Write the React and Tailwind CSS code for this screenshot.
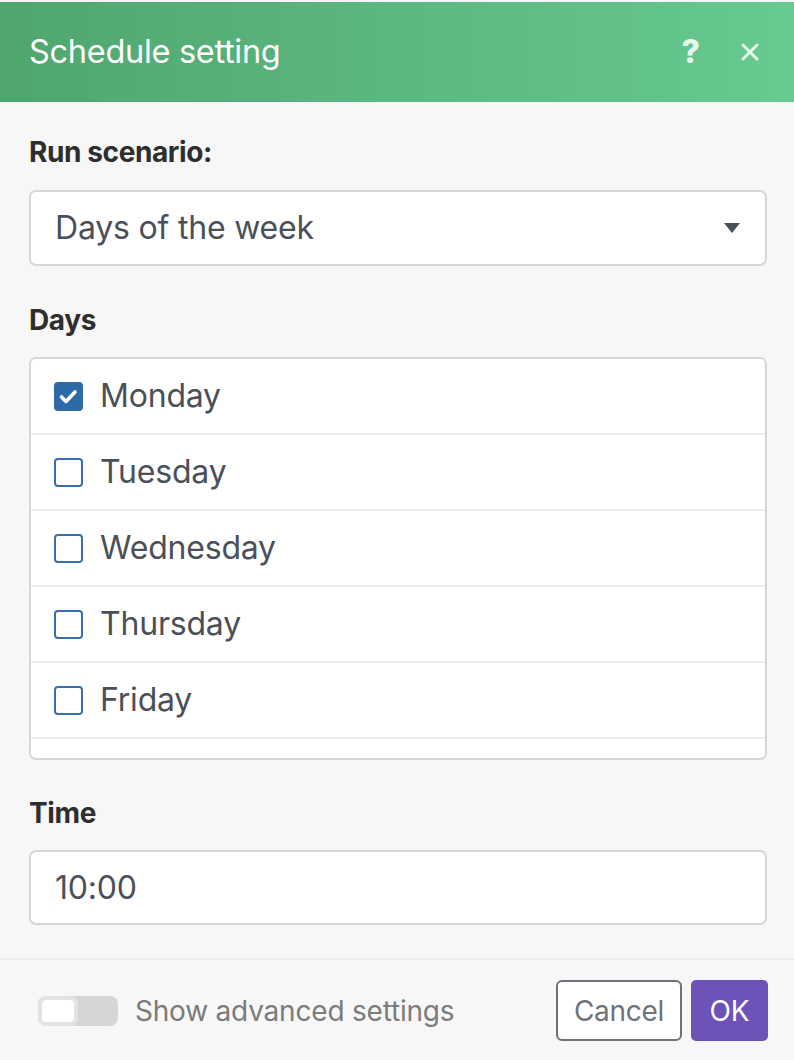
import React, { useState } from "react";

const days = ["Monday", "Tuesday", "Wednesday", "Thursday", "Friday", "Saturday"];

const CheckBox = ({ checked }) => (
    <span
        className={
            "flex items-center justify-center w-[29px] h-[29px] rounded-[4px] border-2 " +
            (checked ? "bg-[#2d6aa6] border-[#2d6aa6]" : "bg-white border-[#3570ab]")
        }
    >
        {checked && (
            <svg width="25" height="25" viewBox="0 0 25 25">
                <path d="M5.5 13l4.5 4.5 9-9.5" fill="none" stroke="#fff" strokeWidth="3.6" strokeLinecap="round" strokeLinejoin="round" />
            </svg>
        )}
    </span>
);

const App = () => {
    const [selected, setSelected] = useState(["Monday"]);

    const toggleDay = (day) => {
        setSelected(selected.includes(day) ? selected.filter((d) => d !== day) : [...selected, day]);
    };

    return (
        <div className="w-[794px] h-[1060px] bg-[#f7f7f7] flex flex-col overflow-hidden font-['Inter',sans-serif]">
            {/* Header */}
            <div className="mt-[2px] h-[100px] shrink-0 flex items-center justify-between pl-[29px] pr-[34px] bg-gradient-to-r from-[#4fa66f] to-[#67ca91]">
                <h1 className="text-[32.5px] text-white font-normal tracking-[-0.3px]">Schedule setting</h1>
                <div className="flex items-center gap-[40px] text-[#e6f7ec]">
                    <span className="text-[32px] font-extrabold leading-none">?</span>
                    <svg width="20" height="20" viewBox="0 0 20 20">
                        <path d="M3 3l14 14M17 3L3 17" stroke="#e6f7ec" strokeWidth="3" strokeLinecap="round" />
                    </svg>
                </div>
            </div>

            {/* Body */}
            <div className="pl-[29px] pr-[27px] pt-[34px] flex flex-col">
                <label className="text-[28px] font-bold text-[#2e2e2e] leading-[32px] tracking-[-0.4px]">Run scenario:</label>
                <div className="mt-[22px] h-[76px] bg-white border-2 border-[#d6d6d6] rounded-[7px] flex items-center justify-between pl-[24px] pr-[24px]">
                    <span className="text-[32px] text-[#4b5058] tracking-[-0.2px]">Days of the week</span>
                    <svg width="18" height="12" viewBox="0 0 18 12">
                        <path d="M1 1h16L9 11z" fill="#4b5058" />
                    </svg>
                </div>

                <label className="mt-[38px] text-[28px] font-bold text-[#2e2e2e] leading-[32px] tracking-[-0.4px]">Days</label>
                <div className="mt-[21px] h-[403px] bg-white border-2 border-[#d6d6d6] rounded-[7px] overflow-y-auto [scrollbar-width:none]">
                    {days.map((day) => (
                        <div
                            key={day}
                            onClick={() => toggleDay(day)}
                            className="h-[76px] flex items-center gap-[17px] pl-[23px] border-b-2 border-[#ececec]"
                        >
                            <CheckBox checked={selected.includes(day)} />
                            <span className="text-[32px] text-[#4b5058] tracking-[-0.2px]">{day}</span>
                        </div>
                    ))}
                </div>

                <label className="mt-[37px] text-[28px] font-bold text-[#2e2e2e] leading-[32px] tracking-[-0.4px]">Time</label>
                <div className="mt-[21px] h-[75px] bg-white border-2 border-[#d6d6d6] rounded-[7px] flex items-center pl-[24px]">
                    <span className="text-[32px] text-[#4b5058] tracking-[-0.2px]">10:00</span>
                </div>
            </div>

            {/* Footer */}
            <div className="mt-[33px] border-t-2 border-[#ededed] flex items-center justify-between pl-[38px] pr-[26px] pt-[20px]">
                <div className="flex items-center gap-[17px]">
                    <div className="w-[80px] h-[30px] rounded-[8px] bg-[#d6d6d6] flex">
                        <div className="w-[40px] h-[30px] rounded-[8px] bg-white border-[4px] border-[#e3e3e3]"></div>
                    </div>
                    <span className="text-[28px] text-[#7b7b7b] tracking-[-0.2px]">Show advanced settings</span>
                </div>
                <div className="flex items-center gap-[9px]">
                    <button className="h-[61px] px-[16px] rounded-[6px] border-2 border-[#6e737b] bg-white text-[28px] text-[#6e737b] tracking-[-0.3px]">
                        Cancel
                    </button>
                    <button className="h-[61px] w-[77px] rounded-[5px] bg-[#6d53b8] text-[28px] text-white">OK</button>
                </div>
            </div>
        </div>
    );
};

export default App;
